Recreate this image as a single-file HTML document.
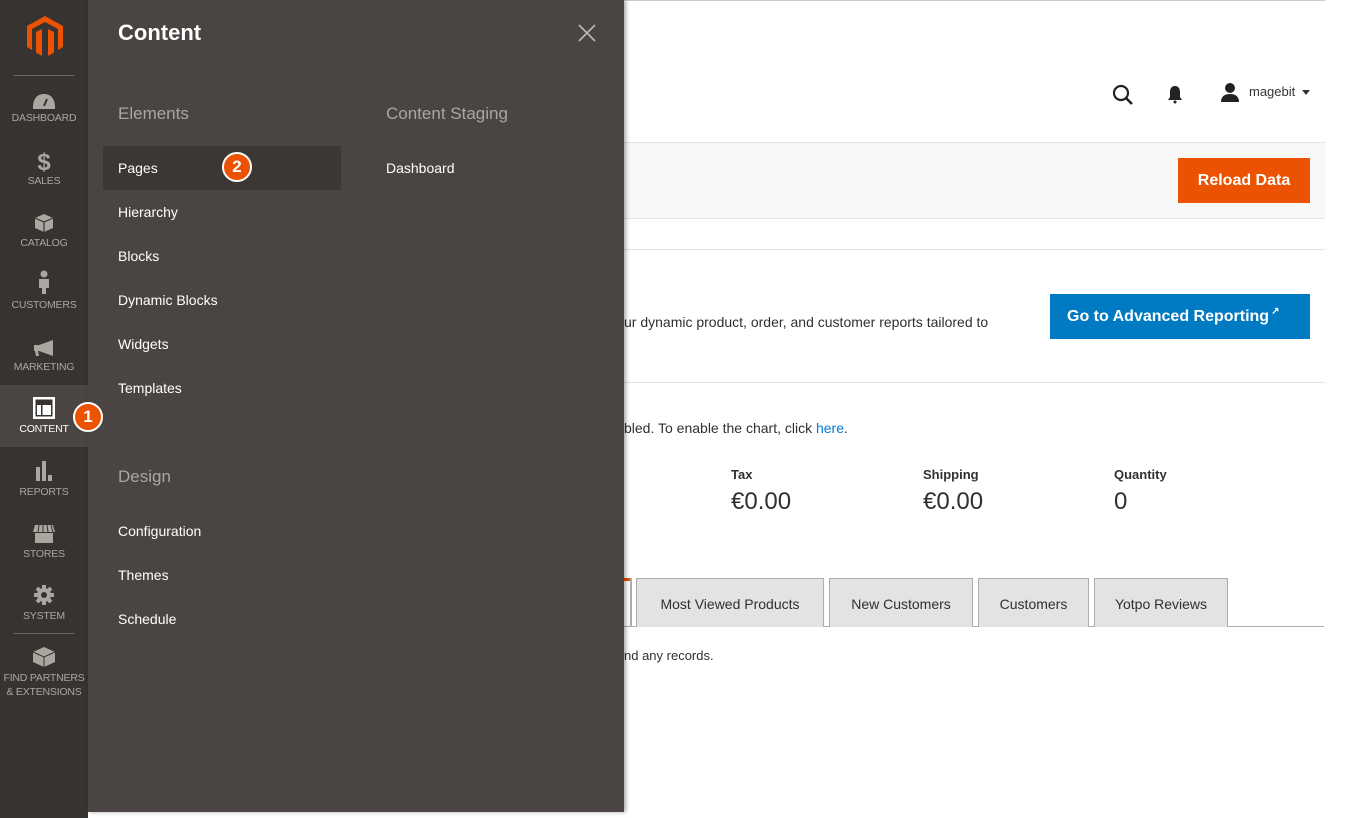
<!DOCTYPE html>
<html><head><meta charset="utf-8"><style>
*{margin:0;padding:0;box-sizing:border-box}
body{width:1354px;height:818px;overflow:hidden;background:#fff;font-family:"Liberation Sans",sans-serif;position:relative;color:#303030}
.abs{position:absolute}
#side{left:0;top:0;width:88px;height:818px;background:#373330}
.nav{position:absolute;left:0;width:88px;text-align:center;color:#aaa6a0;font-size:10.5px;letter-spacing:-0.2px}
.nav svg{display:block;margin:0 auto 3px}
#panel{left:88px;top:0;width:536px;height:812px;background:#4a4542;box-shadow:2px 0 4px rgba(0,0,0,.35)}
.mi{position:absolute;color:#fff;font-size:14px}
.hd{position:absolute;color:#aaa6a0;font-size:17px}
.badge{position:absolute;width:30px;height:30px;border-radius:50%;background:#eb5202;border:2px solid #fff;color:#fff;font-weight:bold;font-size:17px;text-align:center;line-height:26px;z-index:5}
.tab{position:absolute;top:578px;height:49px;background:#e3e3e3;border:1px solid #adadad;border-bottom:none;font-size:14px;color:#303030;text-align:center;line-height:50px}
</style></head><body>
<div class="abs" style="left:624px;top:0;width:701px;height:1px;background:#ccc"></div>
<div class="abs" style="left:624px;top:142px;width:701px;height:77px;background:#f8f8f8;border-top:1px solid #e3e3e3;border-bottom:1px solid #e3e3e3"></div>
<div class="abs" style="left:624px;top:249px;width:701px;height:1px;background:#e3e3e3"></div>
<div class="abs" style="left:624px;top:382px;width:701px;height:1px;background:#e3e3e3"></div>
<svg class="abs" style="left:1111px;top:83px" width="24" height="24" viewBox="0 0 24 24"><circle cx="10" cy="10" r="7" fill="none" stroke="#222" stroke-width="2.2"/><path d="M15 15l6 6" stroke="#222" stroke-width="2.6"/></svg>
<svg class="abs" style="left:1166px;top:84px" width="18" height="20" viewBox="0 0 18 20"><path d="M9 2c-3 0-5 2-5 6v5l-2 3h14l-2-3V8c0-4-2-6-5-6z" fill="#222"/><circle cx="9" cy="18" r="1.5" fill="#222"/></svg>
<svg class="abs" style="left:1220px;top:82px" width="20" height="20" viewBox="0 0 20 20"><circle cx="10" cy="6" r="5" fill="#222"/><path d="M1 20c0-6 4-8 9-8s9 2 9 8z" fill="#222"/></svg>
<div class="abs" style="left:1249px;top:84px;font-size:13px;color:#333">magebit</div>
<div class="abs" style="left:1302px;top:90px;border:4px solid transparent;border-top:5px solid #333"></div>
<div class="abs" style="left:1178px;top:158px;width:132px;height:45px;background:#eb5202;color:#fff;font-weight:bold;font-size:16px;text-align:center;line-height:45px">Reload Data</div>
<div class="abs" style="left:1050px;top:294px;width:260px;height:45px;background:#007bc3;color:#fff;font-weight:bold;font-size:16px;line-height:45px;padding-left:17px">Go to Advanced Reporting<span style="font-size:10px;position:relative;top:-7px;margin-left:2px">&#8599;</span></div>
<div class="abs" style="left:624px;top:314px;font-size:14px;color:#303030">ur dynamic product, order, and customer reports tailored to</div>
<div class="abs" style="left:624px;top:420px;font-size:14px;color:#303030">bled. To enable the chart, click <span style="color:#007bdb">here</span>.</div>
<div class="abs" style="left:731px;top:467px;font-size:13px;font-weight:bold">Tax</div>
<div class="abs" style="left:731px;top:488px;font-size:24px">€0.00</div>
<div class="abs" style="left:923px;top:467px;font-size:13px;font-weight:bold">Shipping</div>
<div class="abs" style="left:923px;top:488px;font-size:24px">€0.00</div>
<div class="abs" style="left:1114px;top:467px;font-size:13px;font-weight:bold">Quantity</div>
<div class="abs" style="left:1114px;top:488px;font-size:24px">0</div>
<div class="abs" style="left:624px;top:578px;width:8px;height:3px;background:#eb5202"></div>
<div class="abs" style="left:630px;top:578px;width:2px;height:49px;background:#adadad"></div>
<div class="abs" style="left:624px;top:626px;width:700px;height:1px;background:#adadad"></div>
<div class="tab" style="left:636px;width:188px">Most Viewed Products</div>
<div class="tab" style="left:829px;width:144px">New Customers</div>
<div class="tab" style="left:978px;width:111px">Customers</div>
<div class="tab" style="left:1094px;width:134px">Yotpo Reviews</div>
<div class="abs" style="left:624px;top:648px;font-size:13px">nd any records.</div>

<div id="side" class="abs">
<svg class="abs" style="left:27px;top:16px" width="36" height="42" viewBox="0 0 36 42"><path d="M18 0L0 10v21l5 3V13l13-7 13 7v21l5-3V10z" fill="#eb5202"/><path d="M9 16l6-3v27l-6-3.5zM27 16l-6-3v27l6-3.5z" fill="#eb5202"/></svg>
<div class="abs" style="left:14px;top:75px;width:60px;height:1px;background:#736963"></div>
<div class="nav" style="top:93px"><svg width="24" height="16" viewBox="0 0 24 16"><path d="M12 1C5 1 1 6 1 14v2h22v-2C23 6 19 1 12 1z" fill="#aaa6a0"/><path d="M12 13l3-7" stroke="#373330" stroke-width="2"/></svg>DASHBOARD</div>
<div class="nav" style="top:150px"><div style="font-size:24px;font-weight:bold;line-height:25px">$</div>SALES</div>
<div class="nav" style="top:212px"><svg width="20" height="22" viewBox="0 0 20 20"><path d="M10 1l9 4v10l-9 4-9-4V5z" fill="#aaa6a0"/><path d="M1 5l9 4 9-4M10 9v10" stroke="#373330" stroke-width="1.2" fill="none"/></svg>CATALOG</div>
<div class="nav" style="top:268px"><svg width="14" height="28" viewBox="0 0 14 24"><circle cx="7" cy="4" r="3.5" fill="#aaa6a0"/><path d="M2 9h10v9H9v6H5v-6H2z" fill="#aaa6a0"/></svg>CUSTOMERS</div>
<div class="nav" style="top:338px"><svg width="24" height="20" viewBox="0 0 24 18"><path d="M2 6h5l14-5v16L7 12H6l1 5H4l-1-5H2z" fill="#aaa6a0"/></svg>MARKETING</div>
<div class="abs" style="left:0;top:385px;width:88px;height:62px;background:#4a4542"></div>
<div class="nav" style="top:396px;color:#fff"><svg width="24" height="24" viewBox="0 0 24 24"><rect x="1" y="1" width="22" height="22" fill="#fff"/><rect x="3.5" y="3.5" width="17" height="17" fill="#373330"/><rect x="5" y="9" width="14" height="10" fill="#fff"/><rect x="9" y="9" width="1.5" height="10" fill="#373330"/></svg>CONTENT</div>
<div class="nav" style="top:460px"><svg width="20" height="23" viewBox="0 0 20 21"><rect x="2" y="6" width="4" height="14" fill="#aaa6a0"/><rect x="8" y="0" width="4" height="20" fill="#aaa6a0"/><rect x="14" y="14" width="4" height="6" fill="#aaa6a0"/></svg>REPORTS</div>
<div class="nav" style="top:523px"><svg width="24" height="22" viewBox="0 0 24 20"><path d="M3 1h18l2 7H1z" fill="#aaa6a0"/><path d="M3 9h18v10H3z" fill="#aaa6a0"/><path d="M7 1L6 8M11 1v7M15 1l1 7M19 1l2 7" stroke="#373330" stroke-width="1"/></svg>STORES</div>
<div class="nav" style="top:583px"><svg width="22" height="24" viewBox="0 0 22 22"><circle cx="11" cy="11" r="7" fill="#aaa6a0"/><path d="M11 1v20M1 11h20M4 4l14 14M18 4L4 18" stroke="#aaa6a0" stroke-width="4"/><circle cx="11" cy="11" r="3" fill="#373330"/></svg>SYSTEM</div>
<div class="abs" style="left:14px;top:633px;width:60px;height:1px;background:#736963"></div>
<div class="nav" style="top:644px;line-height:14px"><svg width="24" height="24" viewBox="0 0 24 22"><path d="M12 2l11 5v10l-11 5L1 17V7z" fill="#aaa6a0"/><path d="M1 7l11 5 11-5M12 12v10" stroke="#373330" stroke-width="1" fill="none"/></svg>FIND PARTNERS<br>&amp; EXTENSIONS</div>
</div>

<div id="panel" class="abs">
<div class="abs" style="left:30px;top:20px;color:#fff;font-size:22px;font-weight:bold">Content</div>
<svg class="abs" style="left:489px;top:23px" width="20" height="20" viewBox="0 0 20 20"><path d="M2 2l16 16M18 2L2 18" stroke="#bdb8b4" stroke-width="1.6"/></svg>
<div class="hd" style="left:30px;top:104px">Elements</div>
<div class="hd" style="left:298px;top:104px">Content Staging</div>
<div class="abs" style="left:15px;top:146px;width:238px;height:44px;background:#3d3734"></div>
<div class="mi" style="left:30px;top:160px">Pages</div>
<div class="badge" style="left:134px;top:152px">2</div>
<div class="mi" style="left:298px;top:160px">Dashboard</div>
<div class="mi" style="left:30px;top:204px">Hierarchy</div>
<div class="mi" style="left:30px;top:248px">Blocks</div>
<div class="mi" style="left:30px;top:292px">Dynamic Blocks</div>
<div class="mi" style="left:30px;top:336px">Widgets</div>
<div class="mi" style="left:30px;top:380px">Templates</div>
<div class="hd" style="left:30px;top:467px">Design</div>
<div class="mi" style="left:30px;top:523px">Configuration</div>
<div class="mi" style="left:30px;top:567px">Themes</div>
<div class="mi" style="left:30px;top:611px">Schedule</div>
</div>
<div class="badge" style="left:73px;top:402px">1</div>
</body></html>
